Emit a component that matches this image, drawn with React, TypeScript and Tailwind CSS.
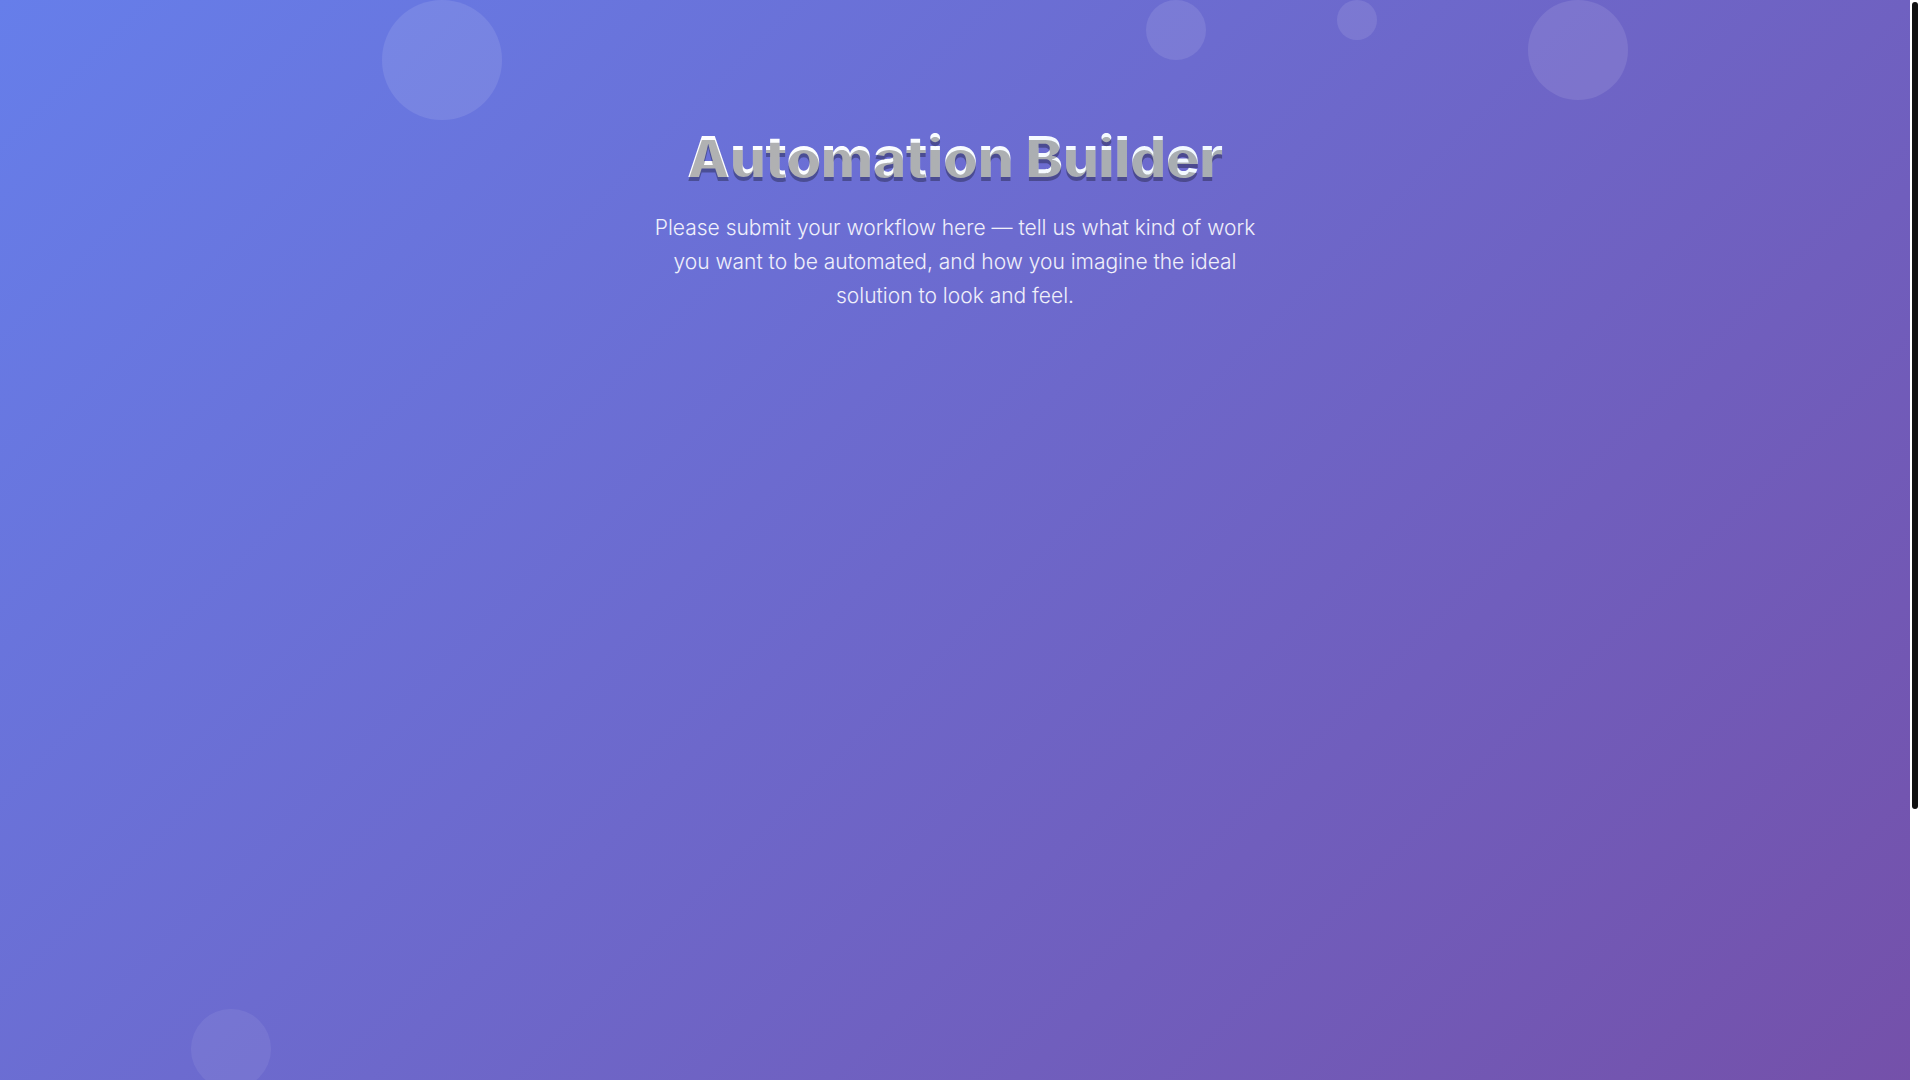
const circles = [
  "top-0 left-[20%] size-30 bg-white/10",
  "top-0 left-[60%] size-15 bg-white/10",
  "top-0 left-[70%] size-10 bg-white/10",
  "top-0 left-[80%] size-25 bg-white/10",
  "top-[70%] left-[10%] size-20 bg-white/7",
];

export default function App() {
  return (
    <div className="flex h-screen overflow-hidden bg-white font-['Inter',sans-serif]">
      <div className="flex-1 overflow-hidden">
        <main className="relative min-h-[1442px] bg-[linear-gradient(135deg,#667eea_0%,#764ba2_100%)] px-8 pt-30">
          {circles.map((c) => (
            <span key={c} aria-hidden="true" className={`absolute rounded-full ${c}`} />
          ))}
          <header className="relative mx-auto flex max-w-[620px] flex-col items-center gap-4 text-center">
            <h1 className="bg-[linear-gradient(45deg,#ffffff,#f0f8ff)] bg-clip-text text-[56px] leading-[75px] font-extrabold whitespace-nowrap text-transparent [text-shadow:0_4px_0_rgba(0,0,0,0.3)]">
              Automation Builder
            </h1>
            <p className="text-[21px] leading-[34px] font-light text-white/90">
              Please submit your workflow here — tell us what kind of work you want to be automated, and how you imagine the ideal solution to look and feel.
            </p>
          </header>
        </main>
      </div>
      <div className="w-2.5 bg-white p-0.5">
        <div className="h-3/4 rounded-full bg-[#111111]" />
      </div>
    </div>
  );
}
